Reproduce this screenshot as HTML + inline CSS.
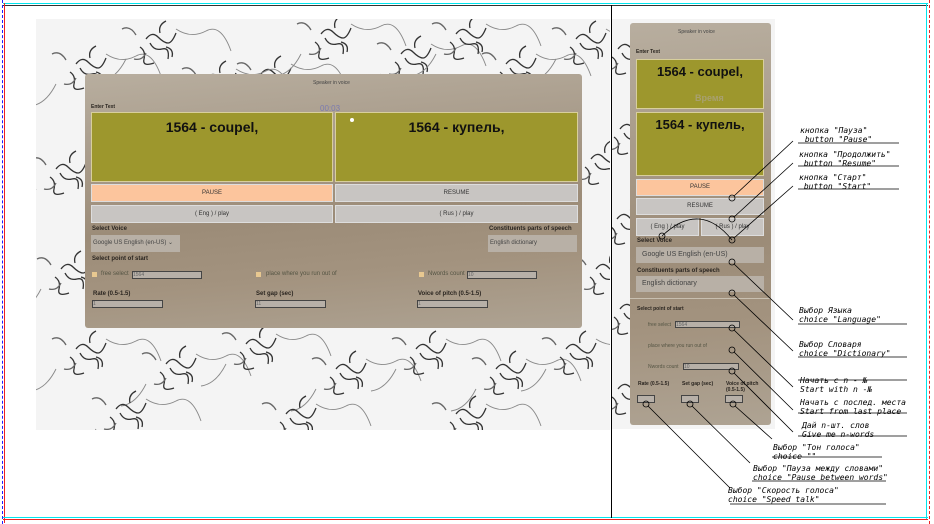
<!DOCTYPE html>
<html><head><meta charset="utf-8"><style>
*{margin:0;padding:0;box-sizing:border-box}
body{width:934px;height:524px;background:#fff;position:relative;overflow:hidden;font-family:"Liberation Sans",sans-serif}
.a{position:absolute}
.marble{background:#f4f4f4}
.card{background:linear-gradient(175deg,#b8ae9f 0%,#a89b8a 30%,#9c8c78 55%,#a3937f 75%,#aea393 100%)}
.box{background:#9d972d;border:1px solid #d8cf9c;color:#111;font-weight:bold;text-align:center}
.btn{background:#c8c5c2;border:1px solid #ddd;text-align:center;color:#333;font-size:6px}
.pk{background:#fcc59d}
.lb{font-size:6px;color:#2a2520;font-weight:bold}
.ln{font-size:6px;color:#554}
.inp{background:#b7b0a8;border:1px solid #444;font-size:5px;color:#666}
.sel{background:#b8b0a6;font-size:6px;color:#444}
.ann{font-family:"DejaVu Sans Mono",monospace;font-style:italic;font-size:8px;line-height:9px;color:#000;white-space:pre}
</style></head><body>
<div class="a" style="left:3px;top:3px;width:925px;height:1px;background:#00e5ee"></div>
<div class="a" style="left:3px;top:5px;width:925px;height:1px;background:#333"></div>
<div class="a" style="left:2px;top:0;width:1px;height:524px;border-left:1px dashed #22f"></div>
<div class="a" style="left:4px;top:3px;width:1px;height:520px;background:#e22"></div>
<div class="a" style="left:3px;top:517px;width:925px;height:1px;background:#00e5ee"></div>
<div class="a" style="left:3px;top:519px;width:925px;height:1px;background:#e22"></div>
<div class="a" style="left:926px;top:3px;width:1px;height:516px;background:#00e5ee"></div>
<div class="a" style="left:929px;top:0;width:1px;height:524px;border-left:1px dashed #e22"></div>
<div class="a" style="left:611px;top:5px;width:1px;height:513px;background:#000"></div>

<div class="a marble" style="left:36px;top:19px;width:574px;height:411px"></div>
<svg class="a" style="left:36px;top:19px" width="574" height="411">
<defs><g id="cl" fill="none" stroke="#333" stroke-width="1.3">
<path d="M0 0 q6 -8 12 -2 t10 6 t8 -10 M4 4 q4 8 12 6 t6 10 M-6 8 q6 4 4 12 t10 4 M14 -6 q-2 -8 6 -12 M20 8 q8 2 6 10"/>
<path d="M-10 -4 q-6 -10 -14 -6 M0 14 q-4 8 -12 6" stroke="#666"/>
<path d="M30 -10 q15 10 30 2 t25 20 M-20 20 q-10 20 -25 22" stroke="#888" stroke-width="0.9"/>
</g></defs>
<use href="#cl" x="40" y="45"/><use href="#cl" x="110" y="20"/><use href="#cl" x="95" y="110"/>
<use href="#cl" x="225" y="55"/><use href="#cl" x="285" y="15"/><use href="#cl" x="365" y="35"/>
<use href="#cl" x="470" y="45"/><use href="#cl" x="540" y="20"/><use href="#cl" x="20" y="150"/>
<use href="#cl" x="25" y="250"/><use href="#cl" x="555" y="140"/><use href="#cl" x="560" y="250"/>
<use href="#cl" x="40" y="330"/><use href="#cl" x="130" y="345"/><use href="#cl" x="210" y="325"/>
<use href="#cl" x="300" y="350"/><use href="#cl" x="380" y="330"/><use href="#cl" x="460" y="350"/>
<use href="#cl" x="530" y="330"/><use href="#cl" x="80" y="390"/><use href="#cl" x="250" y="395"/>
<use href="#cl" x="420" y="395"/><use href="#cl" x="170" y="60"/><use href="#cl" x="420" y="15"/>
</svg>
<div class="a card" style="left:85px;top:74px;width:497px;height:254px;border-radius:3px"></div>
<div class="a" style="left:313px;top:80px;font-size:5px;color:#444">Speaker in voice</div>
<div class="a lb" style="left:91px;top:104px;font-size:5px">Enter Text</div>
<div class="a" style="left:320px;top:104px;font-size:8px;color:#7a7ab0">00:03</div>
<div class="a box" style="left:91px;top:112px;width:242px;height:70px;font-size:14px;padding-top:6px">1564 - coupel,</div>
<div class="a box" style="left:335px;top:112px;width:243px;height:70px;font-size:14px;padding-top:6px">1564 - купель,</div>
<div class="a" style="left:350px;top:118px;width:4px;height:4px;border-radius:2px;background:#fff"></div>
<div class="a btn pk" style="left:91px;top:184px;width:242px;height:18px;line-height:16px">PAUSE</div>
<div class="a btn" style="left:335px;top:184px;width:243px;height:18px;line-height:16px">RESUME</div>
<div class="a btn" style="left:91px;top:205px;width:242px;height:18px;line-height:16px">( Eng ) / play</div>
<div class="a btn" style="left:335px;top:205px;width:243px;height:18px;line-height:16px">( Rus ) / play</div>
<div class="a lb" style="left:92px;top:226px">Select Voice</div>
<div class="a lb" style="left:489px;top:226px">Constituents parts of speech</div>
<div class="a sel" style="left:91px;top:235px;width:89px;height:17px;line-height:17px;padding-left:2px">Google US English (en-US) ⌄</div>
<div class="a sel" style="left:488px;top:235px;width:89px;height:17px;line-height:17px;padding-left:2px">English dictionary</div>
<div class="a lb" style="left:92px;top:256px">Select point of start</div>
<div class="a" style="left:92px;top:272px;width:5px;height:5px;background:#e8c890"></div>
<div class="a ln" style="left:101px;top:271px">free select</div>
<div class="a inp" style="left:132px;top:271px;width:70px;height:8px">1564</div>
<div class="a" style="left:256px;top:272px;width:5px;height:5px;background:#e8c890"></div>
<div class="a ln" style="left:266px;top:271px">place where you run out of</div>
<div class="a" style="left:419px;top:272px;width:5px;height:5px;background:#e8c890"></div>
<div class="a ln" style="left:428px;top:271px">Nwords count</div>
<div class="a inp" style="left:467px;top:271px;width:70px;height:8px">10</div>
<div class="a lb" style="left:93px;top:291px">Rate (0.5-1.5)</div>
<div class="a lb" style="left:256px;top:291px">Set gap (sec)</div>
<div class="a lb" style="left:418px;top:291px">Voice of pitch (0.5-1.5)</div>
<div class="a inp" style="left:92px;top:300px;width:71px;height:8px">1</div>
<div class="a inp" style="left:255px;top:300px;width:71px;height:8px">11</div>
<div class="a inp" style="left:417px;top:300px;width:71px;height:8px">1</div>

<div class="a marble" style="left:612px;top:19px;width:163px;height:410px"></div>
<svg class="a" style="left:612px;top:19px" width="163" height="410">
<use href="#cl" x="6" y="30"/><use href="#cl" x="8" y="110"/><use href="#cl" x="5" y="200"/>
<use href="#cl" x="8" y="290"/><use href="#cl" x="6" y="370"/></svg>
<div class="a card" style="left:630px;top:23px;width:141px;height:402px;border-radius:3px"></div>
<div class="a" style="left:678px;top:29px;font-size:5px;color:#444">Speaker in voice</div>
<div class="a lb" style="left:636px;top:49px;font-size:5px">Enter Text</div>
<div class="a box" style="left:636px;top:59px;width:128px;height:50px;font-size:13px;padding-top:4px">1564 - coupel,</div>
<div class="a" style="left:695px;top:93px;font-size:9px;color:#a8a070;font-weight:bold">Время</div>
<div class="a box" style="left:636px;top:112px;width:128px;height:64px;font-size:13px;padding-top:4px">1564 - купель,</div>
<div class="a btn pk" style="left:636px;top:179px;width:128px;height:17px;line-height:15px">PAUSE</div>
<div class="a btn" style="left:636px;top:198px;width:128px;height:17px;line-height:15px">RESUME</div>
<div class="a btn" style="left:636px;top:218px;width:63px;height:18px;line-height:16px">( Eng ) / play</div>
<div class="a btn" style="left:701px;top:218px;width:63px;height:18px;line-height:16px">( Rus ) / play</div>
<div class="a lb" style="left:637px;top:238px">Select Voice</div>
<div class="a sel" style="left:636px;top:247px;width:128px;height:16px;line-height:16px;padding-left:6px;font-size:7px">Google US English (en-US)</div>
<div class="a lb" style="left:637px;top:268px">Constituents parts of speech</div>
<div class="a sel" style="left:636px;top:276px;width:128px;height:16px;line-height:16px;padding-left:6px;font-size:7px">English dictionary</div>
<div class="a" style="left:630px;top:298px;width:141px;height:1px;background:#c8bfb0"></div>
<div class="a lb" style="left:637px;top:306px;font-size:5px">Select point of start</div>
<div class="a ln" style="left:648px;top:322px;font-size:5px">free select</div>
<div class="a inp" style="left:675px;top:321px;width:65px;height:7px">1564</div>
<div class="a ln" style="left:648px;top:343px;font-size:5px">place where you run out of</div>
<div class="a ln" style="left:648px;top:364px;font-size:5px">Nwords count</div>
<div class="a inp" style="left:683px;top:363px;width:56px;height:7px">10</div>
<div class="a lb" style="left:638px;top:381px;font-size:5px">Rate (0.5-1.5)</div>
<div class="a lb" style="left:682px;top:381px;font-size:5px">Set gap (sec)</div>
<div class="a lb" style="left:726px;top:381px;font-size:5px">Voice of pitch<br>(0.5-1.5)</div>
<div class="a inp" style="left:637px;top:395px;width:18px;height:8px"></div>
<div class="a inp" style="left:681px;top:395px;width:18px;height:8px"></div>
<div class="a inp" style="left:725px;top:395px;width:18px;height:8px"></div>

<svg class="a" style="left:0;top:0" width="934" height="524"><g fill="none" stroke="#000" stroke-width="0.8">
<circle cx="732" cy="198" r="3"/><circle cx="732" cy="219" r="3"/><circle cx="732" cy="240" r="3"/>
<circle cx="662" cy="236" r="3"/><circle cx="732" cy="262" r="3"/><circle cx="732" cy="293" r="3"/>
<circle cx="732" cy="328" r="3"/><circle cx="732" cy="350" r="3"/><circle cx="732" cy="371" r="3"/>
<circle cx="646" cy="404" r="3"/><circle cx="690" cy="404" r="3"/><circle cx="733" cy="404" r="3"/>
<path d="M662 236 Q700 200 732 240"/>
<path d="M734 196 L793 141 M734 217 L793 163 M734 238 L793 186"/>
<path d="M734 264 L793 320 M734 295 L793 351 M734 330 L793 387 M734 352 L793 410 M734 373 L793 432"/>
<path d="M735 406 L772 439 M692 406 L750 463 M648 406 L730 488"/>
<path d="M798 143 H899 M798 166 H899 M798 189 H899 M798 324 H907 M798 357 H907 M798 380 H907 M798 413 H907 M798 436 H907 M772 457 H882 M752 481 H886 M730 504 H886"/>
</g></svg>
<div class="a ann" style="left:800px;top:126px">кнопка "Пауза"
 button "Pause"</div>
<div class="a ann" style="left:799px;top:150px">кнопка "Продолжить"
 button "Resume"</div>
<div class="a ann" style="left:799px;top:173px">кнопка "Старт"
 button "Start"</div>
<div class="a ann" style="left:799px;top:306px">Выбор Языка
choice "Language"</div>
<div class="a ann" style="left:799px;top:340px">Выбор Словаря
choice "Dictionary"</div>
<div class="a ann" style="left:800px;top:376px">Начать с n - №
Start with n -№</div>
<div class="a ann" style="left:800px;top:398px">Начать с послед. места
Start from last place</div>
<div class="a ann" style="left:802px;top:421px">Дай n-шт. слов
Give me n-words</div>
<div class="a ann" style="left:773px;top:443px">Выбор "Тон голоса"
choice ""</div>
<div class="a ann" style="left:753px;top:464px">Выбор "Пауза между словами"
choice "Pause between words"</div>
<div class="a ann" style="left:728px;top:486px">Выбор "Скорость голоса"
choice "Speed talk"</div>
</body></html>
